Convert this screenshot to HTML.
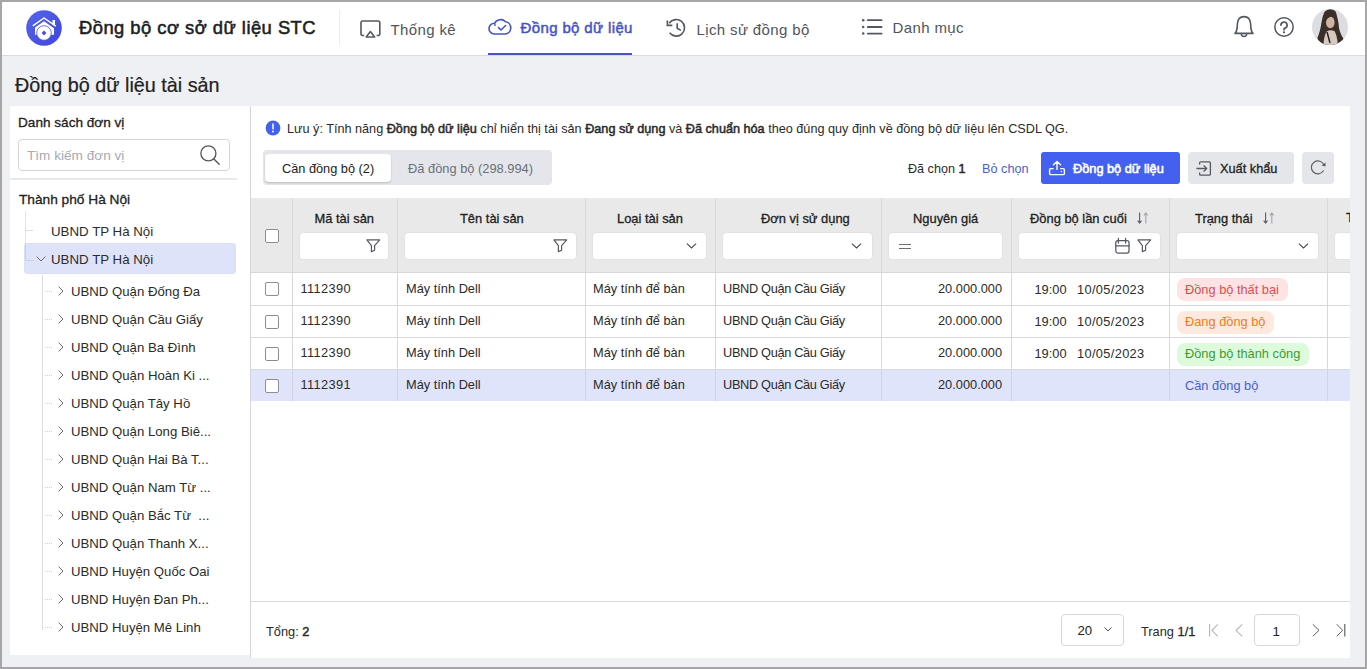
<!DOCTYPE html>
<html><head><meta charset="utf-8">
<style>
*{box-sizing:border-box;margin:0;padding:0}
html,body{width:1367px;height:669px;overflow:hidden;background:#eff0f3;font-family:"Liberation Sans",sans-serif;color:#222;position:relative}
.a{position:absolute}
.t{position:absolute;white-space:nowrap;line-height:1}
.med{-webkit-text-stroke:0.3px currentColor}
.bld{-webkit-text-stroke:0.5px currentColor}
.nav{font-size:15px;letter-spacing:0.37px;color:#50545c}
svg{position:absolute;overflow:visible}
.tb{font-size:12.8px;color:#2b2b2b}
.tr{font-size:13.2px;color:#2b2b2b}
.dh{position:absolute;left:45px;width:7px;height:0;border-top:1px dotted #cfcfcf}
</style></head><body>
<!-- header -->
<div class="a" style="left:0;top:0;width:1367px;height:56px;background:#fff;border-bottom:1px solid #d9dbe0"></div>
<!-- logo -->
<svg style="left:26px;top:10px" width="36" height="36" viewBox="0 0 36 36">
  <defs><linearGradient id="lg" x1="0" y1="0" x2="1" y2="1"><stop offset="0" stop-color="#5468ea"/><stop offset="1" stop-color="#3f44db"/></linearGradient></defs>
  <circle cx="18" cy="18" r="17.8" fill="url(#lg)"/>
  <path d="M7.2 15.6 L18 8 L29.4 15.8" fill="none" stroke="#fff" stroke-width="1.45" stroke-linecap="round" stroke-linejoin="round"/>
  <rect x="26.5" y="10" width="2.5" height="5" fill="#fff"/>
  <path d="M9 17.6 L18 11.3 L28 18.2 V24.8 H9 Z" fill="#fff"/>
  <circle cx="18" cy="23" r="7.3" fill="#fff" stroke="#4a4fdf" stroke-width="0.8"/>
  <rect x="16.3" y="21.3" width="3.4" height="3.4" fill="#4a4fdf" transform="rotate(45 18 23)"/>
</svg>
<div class="t" style="left:79px;top:18.5px;font-size:18.4px;letter-spacing:0.46px;-webkit-text-stroke:0.55px #1d1f24;color:#1d1f24">Đồng bộ cơ sở dữ liệu STC</div>
<div class="a" style="left:339px;top:10px;width:1px;height:35px;background:#ebecef"></div>
<!-- nav -->
<svg style="left:360px;top:20px" width="21" height="18" viewBox="0 0 21 18">
  <path d="M4.2 15.5 H2.6 Q1 15.5 1 13.9 V2.6 Q1 1 2.6 1 H18.2 Q19.8 1 19.8 2.6 V13.9 Q19.8 15.5 18.2 15.5 H16.6" fill="none" stroke="#54585f" stroke-width="1.6"/>
  <path d="M10.4 11.6 L14.6 17 H6.2 Z" fill="none" stroke="#54585f" stroke-width="1.6" stroke-linejoin="round"/>
</svg>
<div class="t nav" style="left:390.5px;top:22px">Thống kê</div>
<svg style="left:488px;top:18px" width="24" height="17" viewBox="0 0 24 17">
  <path d="M6.2 16 H17 A6.2 6.2 0 0 0 17.6 3.7 A7 7 0 0 0 6.6 5.2 A5.4 5.4 0 0 0 6.2 16 Z" fill="none" stroke="#4754c6" stroke-width="1.6" stroke-linejoin="round"/>
  <path d="M6.6 5.2 A 5 5 0 0 1 7 8" fill="none" stroke="#4754c6" stroke-width="1.4"/>
  <path d="M10.5 9.6 L13 12 L17.6 7.5" fill="none" stroke="#4754c6" stroke-width="1.6" stroke-linecap="round" stroke-linejoin="round"/>
</svg>
<div class="t nav bld" style="left:520.5px;top:20px;color:#4754c6">Đồng bộ dữ liệu</div>
<div class="a" style="left:488px;top:53px;width:144px;height:2px;background:#4754c6"></div>
<svg style="left:665px;top:18px" width="22" height="20" viewBox="0 0 22 20">
  <path d="M4.3 5.3 A8.3 8.3 0 1 1 4.6 14.8" fill="none" stroke="#54585f" stroke-width="1.6"/>
  <path d="M2.4 2.5 V7.3 H7.3" fill="none" stroke="#54585f" stroke-width="1.7" stroke-linejoin="miter"/>
  <path d="M12.2 5.2 V10.3 L15.9 12.4" fill="none" stroke="#54585f" stroke-width="1.6"/>
</svg>
<div class="t nav" style="left:696.5px;top:21.5px">Lịch sử đồng bộ</div>
<svg style="left:861px;top:18px" width="26" height="18" viewBox="0 0 26 18">
  <circle cx="2.2" cy="2.2" r="1.25" fill="#54585f"/><circle cx="2.2" cy="9" r="1.25" fill="#54585f"/><circle cx="2.2" cy="15.6" r="1.25" fill="#54585f"/>
  <path d="M6.8 2.2 H20.6 M6.8 9 H20.6 M6.8 15.6 H20.6" stroke="#54585f" stroke-width="1.8" stroke-linecap="round"/>
</svg>
<div class="t nav" style="left:892.5px;top:20px">Danh mục</div>
<!-- right icons -->
<svg style="left:1234px;top:16px" width="20" height="22" viewBox="0 0 20 22">
  <path d="M1 17.4 H19 Q17.3 15.8 16.9 12.2 L16.6 7.8 Q16.1 0.6 10 0.6 Q3.9 0.6 3.4 7.8 L3.1 12.2 Q2.7 15.8 1 17.4 Z" fill="none" stroke="#54585f" stroke-width="1.6" stroke-linejoin="round"/>
  <path d="M7.3 17.8 A2.7 2.7 0 0 0 12.7 17.8" fill="none" stroke="#54585f" stroke-width="1.5"/>
</svg>
<svg style="left:1274px;top:17px" width="20" height="20" viewBox="0 0 20 20">
  <circle cx="10" cy="10" r="9.2" fill="none" stroke="#54585f" stroke-width="1.5"/>
  <path d="M6.9 8.2 A3.1 3.1 0 1 1 10.9 11.1 Q10 11.5 10 12.4 V12.8" fill="none" stroke="#54585f" stroke-width="1.7" stroke-linecap="round"/>
  <circle cx="10" cy="15.3" r="1.1" fill="#54585f"/>
</svg>
<svg style="left:1312px;top:9px" width="36" height="36" viewBox="0 0 36 36">
  <defs><clipPath id="av"><circle cx="18" cy="18" r="18"/></clipPath></defs>
  <g clip-path="url(#av)">
    <rect width="36" height="36" fill="#dcdde0"/>
    <path d="M17.4 0.3 Q13 1.5 12 3.9 Q10.2 8 9.6 12.9 Q8.8 18 7.8 21.9 Q6.6 26 5.4 29 Q6 32 7.8 32.6 L11 37 H28 L28.7 33.2 Q31 32 31.7 30.2 Q30.5 28 29.3 26 Q27.6 22 27 18.9 Q26.6 13 25.7 9.9 Q24.8 5 23.3 2.1 Q20.5 0 17.4 0.3 Z" fill="#3b2e28"/>
    <path d="M11.4 37 Q11.8 27 14.6 22.5 Q18 20.5 22.4 22 Q25.4 27 25.8 37 Z" fill="#d6c9c3"/>
    <ellipse cx="18.3" cy="13.4" rx="4.3" ry="5.8" fill="#cfb2a2"/>
    <path d="M12.8 10 Q14.5 5.8 19 5.2 Q22.6 5 22.8 8 Q19 6.6 15.6 9.4 Q14 11 13.4 13 Z" fill="#3b2e28"/>
    <path d="M15 23 Q16.5 28 18 34" fill="none" stroke="#2a2220" stroke-width="1.5"/>
  </g>
</svg>
<!-- page title -->
<div class="t" style="left:15px;top:76px;font-size:19.8px;color:#222;-webkit-text-stroke:0.2px #222">Đồng bộ dữ liệu tài sản</div>

<!-- left panel -->
<div class="a" style="left:10px;top:106px;width:240px;height:549px;background:#fff"></div>
<div class="t med" style="left:18px;top:116px;font-size:13.6px;color:#222">Danh sách đơn vị</div>
<div class="a" style="left:18px;top:139px;width:212px;height:32px;border:1px solid #d3d5d9;border-radius:4px;background:#fff"></div>
<div class="t" style="left:27px;top:148.5px;font-size:13.6px;color:#a6aab4">Tìm kiếm đơn vị</div>
<svg style="left:199px;top:144px" width="22" height="22" viewBox="0 0 22 22">
  <circle cx="9.4" cy="9.4" r="7.5" fill="none" stroke="#54575d" stroke-width="1.35"/>
  <path d="M14.9 14.9 L20.2 20.2" stroke="#54575d" stroke-width="1.4" stroke-linecap="round"/>
</svg>
<div class="a" style="left:10px;top:178px;width:227px;height:2px;background:#e8e9ec"></div>
<div class="t med" style="left:19px;top:192.5px;font-size:13.7px;color:#222">Thành phố Hà Nội</div>
<div class="a" style="left:25px;top:211px;width:1px;height:50px;background:#e4e4e4"></div>
<div class="a" style="left:25px;top:230px;width:8px;height:1px;background:#dcdcdc"></div>
<div class="t tr" style="left:51px;top:225px;font-size:13.3px">UBND TP Hà Nội</div>
<div class="a" style="left:24px;top:243px;width:212px;height:31px;background:#dfe3fa;border-radius:4px;box-shadow:inset 0 0 0 0.5px #d6daf2"></div>
<div class="a" style="left:25px;top:243px;width:1px;height:18px;background:#ccd0e2"></div>
<div class="a" style="left:25px;top:260px;width:9px;height:1px;background:#cdd1e3"></div>
<svg style="left:36px;top:256px" width="10" height="6" viewBox="0 0 10 6"><path d="M0.6 0.6 L5 5 L9.4 0.6" fill="none" stroke="#666" stroke-width="0.95"/></svg>
<div class="t tr" style="left:51px;top:253px;font-size:13.3px">UBND TP Hà Nội</div>
<div class="a" style="left:42px;top:275px;width:1px;height:355px;background:#dcdcdc"></div>
<div class="dh" style="top:291px"></div><svg style="left:58px;top:286px" width="6" height="10" viewBox="0 0 6 10"><path d="M0.6 0.6 L5 5 L0.6 9.4" fill="none" stroke="#666" stroke-width="0.95"/></svg><div class="t tr" style="left:71px;top:285px">UBND Quận Đống Đa</div><div class="dh" style="top:319px"></div><svg style="left:58px;top:314px" width="6" height="10" viewBox="0 0 6 10"><path d="M0.6 0.6 L5 5 L0.6 9.4" fill="none" stroke="#666" stroke-width="0.95"/></svg><div class="t tr" style="left:71px;top:313px">UBND Quận Cầu Giấy</div><div class="dh" style="top:347px"></div><svg style="left:58px;top:342px" width="6" height="10" viewBox="0 0 6 10"><path d="M0.6 0.6 L5 5 L0.6 9.4" fill="none" stroke="#666" stroke-width="0.95"/></svg><div class="t tr" style="left:71px;top:341px">UBND Quận Ba Đình</div><div class="dh" style="top:375px"></div><svg style="left:58px;top:370px" width="6" height="10" viewBox="0 0 6 10"><path d="M0.6 0.6 L5 5 L0.6 9.4" fill="none" stroke="#666" stroke-width="0.95"/></svg><div class="t tr" style="left:71px;top:369px">UBND Quận Hoàn Ki ...</div><div class="dh" style="top:403px"></div><svg style="left:58px;top:398px" width="6" height="10" viewBox="0 0 6 10"><path d="M0.6 0.6 L5 5 L0.6 9.4" fill="none" stroke="#666" stroke-width="0.95"/></svg><div class="t tr" style="left:71px;top:397px">UBND Quận Tây Hồ</div><div class="dh" style="top:431px"></div><svg style="left:58px;top:426px" width="6" height="10" viewBox="0 0 6 10"><path d="M0.6 0.6 L5 5 L0.6 9.4" fill="none" stroke="#666" stroke-width="0.95"/></svg><div class="t tr" style="left:71px;top:425px">UBND Quận Long Biê...</div><div class="dh" style="top:459px"></div><svg style="left:58px;top:454px" width="6" height="10" viewBox="0 0 6 10"><path d="M0.6 0.6 L5 5 L0.6 9.4" fill="none" stroke="#666" stroke-width="0.95"/></svg><div class="t tr" style="left:71px;top:453px">UBND Quận Hai Bà T...</div><div class="dh" style="top:487px"></div><svg style="left:58px;top:482px" width="6" height="10" viewBox="0 0 6 10"><path d="M0.6 0.6 L5 5 L0.6 9.4" fill="none" stroke="#666" stroke-width="0.95"/></svg><div class="t tr" style="left:71px;top:481px">UBND Quận Nam Từ ...</div><div class="dh" style="top:515px"></div><svg style="left:58px;top:510px" width="6" height="10" viewBox="0 0 6 10"><path d="M0.6 0.6 L5 5 L0.6 9.4" fill="none" stroke="#666" stroke-width="0.95"/></svg><div class="t tr" style="left:71px;top:509px">UBND Quận Bắc Từ &nbsp;...</div><div class="dh" style="top:543px"></div><svg style="left:58px;top:538px" width="6" height="10" viewBox="0 0 6 10"><path d="M0.6 0.6 L5 5 L0.6 9.4" fill="none" stroke="#666" stroke-width="0.95"/></svg><div class="t tr" style="left:71px;top:537px">UBND Quận Thanh X...</div><div class="dh" style="top:571px"></div><svg style="left:58px;top:566px" width="6" height="10" viewBox="0 0 6 10"><path d="M0.6 0.6 L5 5 L0.6 9.4" fill="none" stroke="#666" stroke-width="0.95"/></svg><div class="t tr" style="left:71px;top:565px">UBND Huyện Quốc Oai</div><div class="dh" style="top:599px"></div><svg style="left:58px;top:594px" width="6" height="10" viewBox="0 0 6 10"><path d="M0.6 0.6 L5 5 L0.6 9.4" fill="none" stroke="#666" stroke-width="0.95"/></svg><div class="t tr" style="left:71px;top:593px">UBND Huyện Đan Ph...</div><div class="dh" style="top:627px"></div><svg style="left:58px;top:622px" width="6" height="10" viewBox="0 0 6 10"><path d="M0.6 0.6 L5 5 L0.6 9.4" fill="none" stroke="#666" stroke-width="0.95"/></svg><div class="t tr" style="left:71px;top:621px">UBND Huyện Mê Linh</div>
<!-- right panel -->
<div class="a" style="left:250px;top:106px;width:1100px;height:552px;background:#fff;border-left:1px solid #d4d6da"></div>
<svg style="left:265px;top:120px" width="16" height="16" viewBox="0 0 16 16"><circle cx="8" cy="8" r="7.4" fill="#4361ee"/><path d="M8 4 V8.8" stroke="#fff" stroke-width="1.5" stroke-linecap="round"/><circle cx="8" cy="11.5" r="0.95" fill="#fff"/></svg>
<div class="t" style="left:287px;top:123px;font-size:12.67px;color:#2a2a2a">Lưu ý: Tính năng <span class="bld">Đồng bộ dữ liệu</span> chỉ hiển thị tài sản <span class="bld">Đang sử dụng</span> và <span class="bld">Đã chuẩn hóa</span> theo đúng quy định về đồng bộ dữ liệu lên CSDL QG.</div>
<div class="a" style="left:263px;top:150px;width:289px;height:35px;background:#e4e6eb;border-radius:4px"></div>
<div class="a" style="left:265px;top:154px;width:126px;height:28px;background:#fff;border-radius:4px;box-shadow:0 1px 2px rgba(0,0,0,0.2)"></div>
<div class="t" style="left:282px;top:163px;font-size:12.75px;color:#222">Cần đồng bộ (2)</div>
<div class="t" style="left:408px;top:163px;font-size:12.85px;color:#6b7079">Đã đồng bộ (298.994)</div>
<div class="t" style="left:908px;top:163px;font-size:12.6px;color:#2a2a2a">Đã chọn <span class="bld">1</span></div>
<div class="t" style="left:982px;top:163px;font-size:12.7px;color:#4a5fc8">Bỏ chọn</div>
<div class="a" style="left:1041px;top:152px;width:139px;height:32px;background:#4361ee;border-radius:3px"></div>
<svg style="left:1048px;top:160px" width="18" height="16" viewBox="0 0 18 16"><path d="M5.6 8.6 H2.8 Q1.6 8.6 1.6 9.8 V13.4 Q1.6 14.6 2.8 14.6 H15.2 Q16.4 14.6 16.4 13.4 V9.8 Q16.4 8.6 15.2 8.6 H12.2" fill="none" stroke="#fff" stroke-width="1.4"/><path d="M9 9.4 V1.8 M5.4 4.8 L9 1.4 L12.6 4.8" fill="none" stroke="#fff" stroke-width="1.4" stroke-linecap="round" stroke-linejoin="round"/><circle cx="13.4" cy="11.6" r="0.75" fill="#fff"/></svg>
<div class="t" style="left:1073px;top:163px;font-size:12.75px;color:#fff;-webkit-text-stroke:0.6px #fff">Đồng bộ dữ liệu</div>
<div class="a" style="left:1188px;top:152px;width:106px;height:32px;background:#e4e6ea;border-radius:4px"></div>
<svg style="left:1196px;top:161px" width="16" height="15" viewBox="0 0 16 15"><path d="M3.6 3.6 V2 Q3.6 0.8 4.8 0.8 H13.2 Q14.4 0.8 14.4 2 V13 Q14.4 14.2 13.2 14.2 H4.8 Q3.6 14.2 3.6 13 V11.4" fill="none" stroke="#54585f" stroke-width="1.3"/><path d="M0.4 7.5 H10.6 M7.6 4.4 L10.7 7.5 L7.6 10.6" fill="none" stroke="#54585f" stroke-width="1.3" stroke-linejoin="round"/></svg>
<div class="t med" style="left:1220px;top:163px;font-size:12.75px;color:#222">Xuất khẩu</div>
<div class="a" style="left:1302px;top:152px;width:32px;height:32px;background:#e4e6ea;border-radius:4px"></div>
<svg style="left:1310px;top:160px" width="17" height="15" viewBox="0 0 17 15"><path d="M14 5.2 A6.5 6.5 0 1 0 13.4 10.8" fill="none" stroke="#5a5e66" stroke-width="1.15" stroke-linecap="round"/><path d="M11.6 5.4 L15.4 6.6 L15.6 2.6 Z" fill="#5a5e66"/></svg>
<div class="a" style="left:251px;top:198px;width:1099px;height:75px;background:#e9e9ea;border-bottom:1px solid #d6d7d9"></div>
<div class="a" style="left:292px;top:198px;width:1px;height:203px;background:#d8d9db"></div>
<div class="a" style="left:397px;top:198px;width:1px;height:203px;background:#d8d9db"></div>
<div class="a" style="left:585px;top:198px;width:1px;height:203px;background:#d8d9db"></div>
<div class="a" style="left:715px;top:198px;width:1px;height:203px;background:#d8d9db"></div>
<div class="a" style="left:881px;top:198px;width:1px;height:203px;background:#d8d9db"></div>
<div class="a" style="left:1011px;top:198px;width:1px;height:203px;background:#d8d9db"></div>
<div class="a" style="left:1169px;top:198px;width:1px;height:203px;background:#d8d9db"></div>
<div class="a" style="left:1327px;top:198px;width:1px;height:203px;background:#d8d9db"></div>
<div class="a" style="left:265px;top:229px;width:14px;height:14px;border:1.2px solid #8a8d93;border-radius:2px;background:#fff"></div>
<div class="t med" style="left:314.5px;top:213px;font-size:12.9px;color:#222">Mã tài sản</div>
<div class="t med" style="left:460px;top:213px;font-size:12.9px;color:#222">Tên tài sản</div>
<div class="t med" style="left:617px;top:213px;font-size:12.9px;color:#222">Loại tài sản</div>
<div class="t med" style="left:761px;top:213px;font-size:12.9px;color:#222">Đơn vị sử dụng</div>
<div class="t med" style="left:913px;top:213px;font-size:12.9px;color:#222">Nguyên giá</div>
<div class="t med" style="left:1030px;top:213px;font-size:12.9px;color:#222">Đồng bộ lần cuối</div>
<div class="t med" style="left:1195px;top:213px;font-size:12.9px;color:#222">Trạng thái</div>
<div class="a" style="left:1328px;top:198px;width:22px;height:74px;overflow:hidden"><div class="t med" style="left:18px;top:14px;font-size:12.9px;color:#222">T</div><div class="a" style="left:7px;top:35px;width:40px;height:26px;background:#fff;border-radius:3.5px;box-shadow:0 0 0 0.5px #dcdcdc"></div></div>
<div class="a" style="left:300px;top:233px;width:88px;height:26px;background:#fff;border-radius:3.5px;box-shadow:0 0 0 0.5px #dcdcdc"></div>
<div class="a" style="left:405px;top:233px;width:171px;height:26px;background:#fff;border-radius:3.5px;box-shadow:0 0 0 0.5px #dcdcdc"></div>
<div class="a" style="left:593px;top:233px;width:113px;height:26px;background:#fff;border-radius:3.5px;box-shadow:0 0 0 0.5px #dcdcdc"></div>
<div class="a" style="left:723px;top:233px;width:149px;height:26px;background:#fff;border-radius:3.5px;box-shadow:0 0 0 0.5px #dcdcdc"></div>
<div class="a" style="left:889px;top:233px;width:113px;height:26px;background:#fff;border-radius:3.5px;box-shadow:0 0 0 0.5px #dcdcdc"></div>
<div class="a" style="left:1019px;top:233px;width:141px;height:26px;background:#fff;border-radius:3.5px;box-shadow:0 0 0 0.5px #dcdcdc"></div>
<div class="a" style="left:1177px;top:233px;width:141px;height:26px;background:#fff;border-radius:3.5px;box-shadow:0 0 0 0.5px #dcdcdc"></div>

<svg style="left:366px;top:239px" width="15" height="13" viewBox="0 0 15 13"><path d="M0.9 0.9 H13.7 L8.6 6.6 V11.2 L5.4 12.6 V6.6 Z" fill="none" stroke="#55595f" stroke-width="1.2" stroke-linejoin="round"/></svg>
<svg style="left:553px;top:239px" width="15" height="13" viewBox="0 0 15 13"><path d="M0.9 0.9 H13.7 L8.6 6.6 V11.2 L5.4 12.6 V6.6 Z" fill="none" stroke="#55595f" stroke-width="1.2" stroke-linejoin="round"/></svg>
<svg style="left:685.5px;top:243px" width="11" height="6" viewBox="0 0 11 6"><path d="M0.9 0.7 L5.5 5 L10.1 0.7" fill="none" stroke="#4a4a4a" stroke-width="1.1"/></svg>
<svg style="left:851px;top:243px" width="11" height="6" viewBox="0 0 11 6"><path d="M0.9 0.7 L5.5 5 L10.1 0.7" fill="none" stroke="#4a4a4a" stroke-width="1.1"/></svg>
<div class="a" style="left:899px;top:244px;width:12px;height:1.3px;background:#6a6e75"></div><div class="a" style="left:899px;top:248px;width:12px;height:1.3px;background:#6a6e75"></div>
<svg style="left:1115px;top:238px" width="15" height="16" viewBox="0 0 15 16"><rect x="0.8" y="2.6" width="13.2" height="12.4" rx="2" fill="none" stroke="#55595f" stroke-width="1.25"/><path d="M0.8 7.9 H14 M3.4 0.4 V5 M10.6 0.4 V5" stroke="#55595f" stroke-width="1.25" stroke-linecap="round"/></svg>
<svg style="left:1137px;top:239px" width="15" height="13" viewBox="0 0 15 13"><path d="M0.9 0.9 H13.7 L8.6 6.6 V11.2 L5.4 12.6 V6.6 Z" fill="none" stroke="#55595f" stroke-width="1.2" stroke-linejoin="round"/></svg>
<svg style="left:1298px;top:243px" width="11" height="6" viewBox="0 0 11 6"><path d="M0.9 0.7 L5.5 5 L10.1 0.7" fill="none" stroke="#4a4a4a" stroke-width="1.1"/></svg>
<svg style="left:1137px;top:212px" width="12" height="12" viewBox="0 0 12 12"><path d="M2.6 0.6 V11 M0.7 8.6 L2.6 11 L4.5 8.6" fill="none" stroke="#5a5e66" stroke-width="1.1"/><path d="M8.8 11.4 V1 M6.9 3.4 L8.8 1 L10.7 3.4" fill="none" stroke="#a3a6ab" stroke-width="1.1"/></svg>
<svg style="left:1263px;top:212px" width="12" height="12" viewBox="0 0 12 12"><path d="M2.6 0.6 V11 M0.7 8.6 L2.6 11 L4.5 8.6" fill="none" stroke="#5a5e66" stroke-width="1.1"/><path d="M8.8 11.4 V1 M6.9 3.4 L8.8 1 L10.7 3.4" fill="none" stroke="#a3a6ab" stroke-width="1.1"/></svg>
<div class="a" style="left:251px;top:305px;width:1099px;height:1px;background:#d8d9db"></div>
<div class="a" style="left:265px;top:282px;width:14px;height:14px;border:1.2px solid #8a8d93;border-radius:2px;background:#fff"></div>
<div class="t tb" style="left:300.5px;top:283px;letter-spacing:0.35px">1112390</div>
<div class="t tb" style="left:406px;top:283px">Máy tính Dell</div>
<div class="t tb" style="left:593px;top:283px">Máy tính để bàn</div>
<div class="t tb" style="left:723px;top:283px;letter-spacing:-0.35px">UBND Quận Cầu Giấy</div>
<div class="t tb" style="left:938px;top:283px">20.000.000</div>
<div class="t tb" style="left:1034.5px;top:284px">19:00</div><div class="t tb" style="left:1077px;top:284px;letter-spacing:0.35px">10/05/2023</div>
<div class="a" style="left:1177px;top:278px;width:111px;height:23px;background:#fde3e3;border-radius:8px"></div>
<div class="t tb" style="left:1185px;top:284px;color:#d84f4f">Đồng bộ thất bại</div>
<div class="a" style="left:251px;top:337px;width:1099px;height:1px;background:#d8d9db"></div>
<div class="a" style="left:265px;top:315px;width:14px;height:14px;border:1.2px solid #8a8d93;border-radius:2px;background:#fff"></div>
<div class="t tb" style="left:300.5px;top:315px;letter-spacing:0.35px">1112390</div>
<div class="t tb" style="left:406px;top:315px">Máy tính Dell</div>
<div class="t tb" style="left:593px;top:315px">Máy tính để bàn</div>
<div class="t tb" style="left:723px;top:315px;letter-spacing:-0.35px">UBND Quận Cầu Giấy</div>
<div class="t tb" style="left:938px;top:315px">20.000.000</div>
<div class="t tb" style="left:1034.5px;top:316px">19:00</div><div class="t tb" style="left:1077px;top:316px;letter-spacing:0.35px">10/05/2023</div>
<div class="a" style="left:1177px;top:311px;width:97px;height:23px;background:#fde9dd;border-radius:8px"></div>
<div class="t tb" style="left:1185px;top:316px;color:#e67e2a">Đang đồng bộ</div>
<div class="a" style="left:251px;top:369px;width:1099px;height:1px;background:#d8d9db"></div>
<div class="a" style="left:265px;top:347px;width:14px;height:14px;border:1.2px solid #8a8d93;border-radius:2px;background:#fff"></div>
<div class="t tb" style="left:300.5px;top:347px;letter-spacing:0.35px">1112390</div>
<div class="t tb" style="left:406px;top:347px">Máy tính Dell</div>
<div class="t tb" style="left:593px;top:347px">Máy tính để bàn</div>
<div class="t tb" style="left:723px;top:347px;letter-spacing:-0.35px">UBND Quận Cầu Giấy</div>
<div class="t tb" style="left:938px;top:347px">20.000.000</div>
<div class="t tb" style="left:1034.5px;top:348px">19:00</div><div class="t tb" style="left:1077px;top:348px;letter-spacing:0.35px">10/05/2023</div>
<div class="a" style="left:1177px;top:343px;width:132px;height:23px;background:#ddfadc;border-radius:8px"></div>
<div class="t tb" style="left:1185px;top:348px;color:#3c9a34">Đồng bộ thành công</div>
<div class="a" style="left:251px;top:370px;width:1099px;height:31px;background:#dfe4fa"></div>
<div class="a" style="left:292px;top:370px;width:1px;height:31px;background:#d0d4e6"></div>
<div class="a" style="left:397px;top:370px;width:1px;height:31px;background:#d0d4e6"></div>
<div class="a" style="left:585px;top:370px;width:1px;height:31px;background:#d0d4e6"></div>
<div class="a" style="left:715px;top:370px;width:1px;height:31px;background:#d0d4e6"></div>
<div class="a" style="left:881px;top:370px;width:1px;height:31px;background:#d0d4e6"></div>
<div class="a" style="left:1011px;top:370px;width:1px;height:31px;background:#d0d4e6"></div>
<div class="a" style="left:1169px;top:370px;width:1px;height:31px;background:#d0d4e6"></div>
<div class="a" style="left:1327px;top:370px;width:1px;height:31px;background:#d0d4e6"></div>
<div class="a" style="left:265px;top:379px;width:14px;height:14px;border:1.2px solid #8a8d93;border-radius:2px;background:#fff"></div>
<div class="t tb" style="left:300.5px;top:379px;letter-spacing:0.35px">1112391</div>
<div class="t tb" style="left:406px;top:379px">Máy tính Dell</div>
<div class="t tb" style="left:593px;top:379px">Máy tính để bàn</div>
<div class="t tb" style="left:723px;top:379px;letter-spacing:-0.35px">UBND Quận Cầu Giấy</div>
<div class="t tb" style="left:938px;top:379px">20.000.000</div>
<div class="t tb" style="left:1185px;top:380px;color:#4a60d0">Cần đồng bộ</div>
<div class="a" style="left:251px;top:601px;width:1099px;height:1px;background:#d8d9db"></div>
<div class="t" style="left:266px;top:626px;font-size:12.8px;color:#2a2a2a">Tổng: <span class="bld">2</span></div>
<div class="a" style="left:1061px;top:614px;width:63px;height:32px;border:1px solid #d5d7db;border-radius:4px;background:#fff"></div>
<div class="t" style="left:1077.5px;top:624px;font-size:13.2px;color:#222">20</div>
<svg style="left:1104px;top:627px" width="8" height="5" viewBox="0 0 8 5"><path d="M0.5 0.5 L4 4 L7.5 0.5" fill="none" stroke="#555" stroke-width="1"/></svg>
<div class="t" style="left:1141px;top:626px;font-size:12.8px;color:#2a2a2a">Trang <span class="med">1/1</span></div>
<svg style="left:1209px;top:624px" width="10" height="13" viewBox="0 0 10 13"><path d="M0.6 0 V12.6" stroke="#b4b6ba" stroke-width="1.1"/><path d="M8.8 0.3 L3 6.3 L8.8 12.3" fill="none" stroke="#b4b6ba" stroke-width="1.1"/></svg>
<svg style="left:1235px;top:624px" width="8" height="13" viewBox="0 0 8 13"><path d="M7.2 0.3 L1 6.3 L7.2 12.3" fill="none" stroke="#b4b6ba" stroke-width="1.1"/></svg>
<div class="a" style="left:1254px;top:614px;width:46px;height:32px;border:1px solid #d5d7db;border-radius:4px;background:#fff"></div>
<div class="t" style="left:1272.5px;top:624.5px;font-size:13.2px;color:#222">1</div>
<svg style="left:1312px;top:624px" width="8" height="13" viewBox="0 0 8 13"><path d="M0.8 0.3 L7 6.3 L0.8 12.3" fill="none" stroke="#5c5c5c" stroke-width="1"/></svg>
<svg style="left:1336px;top:624px" width="10" height="13" viewBox="0 0 10 13"><path d="M0.8 0.3 L6.6 6.3 L0.8 12.3" fill="none" stroke="#5c5c5c" stroke-width="1"/><path d="M8.8 0 V12.6" stroke="#5c5c5c" stroke-width="1.15"/></svg>
<!-- /right panel -->
<!-- frame border -->
<div class="a" style="left:0;top:0;width:1367px;height:2px;background:#a6a6a6"></div>
<div class="a" style="left:0;top:0;width:2px;height:669px;background:#a6a6a6"></div>
<div class="a" style="left:1365px;top:0;width:2px;height:669px;background:#a6a6a6"></div>
<div class="a" style="left:0;top:667px;width:1367px;height:2px;background:#a6a6a6"></div>
</body></html>
